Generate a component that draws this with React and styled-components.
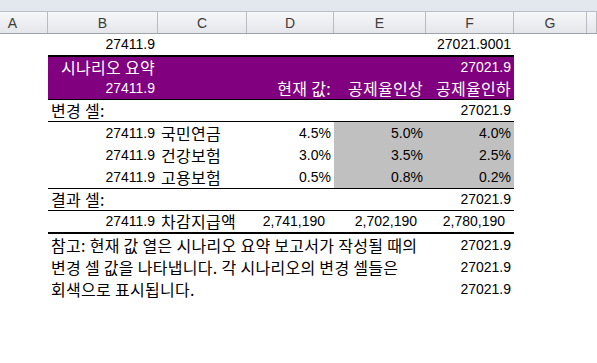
import React from 'react';
import styled, { createGlobalStyle } from 'styled-components';

const GlobalStyle = createGlobalStyle`
  html, body, #root {
    margin: 0;
    padding: 0;
    background: #fff;
  }
  body {
    font-family: "Liberation Sans", "Noto Sans CJK KR", sans-serif;
    font-size: 14px;
    color: #000;
  }
`;

const COLS = '48px 110px 89px 87px 92px 88px 73px 1fr';

// --- Sheet chrome ---

const Sheet = styled.div`
  width: 597px;
  height: 363px;
  overflow: hidden;
  background: #fff;
`;

const TopStrip = styled.div`
  height: 11px;
  background: #e3e8ef;
  border-bottom: 1px solid #b9c0c9;
`;

const HeaderRow = styled.div`
  display: grid;
  grid-template-columns: ${COLS};
  height: 22px;
  box-sizing: border-box;
  background: linear-gradient(#f6f7f9, #e4e6ea);
  border-bottom: 1px solid #9ea3aa;
`;

const ColHead = styled.div`
  display: flex;
  align-items: center;
  justify-content: center;
  padding-right: ${p => p.$shift || 0}px;
  border-right: 1px solid #b8bcc2;
  color: #3c3c3c;
  font-size: 14px;
`;

// --- Table rows ---

const Row = styled.div`
  display: grid;
  grid-template-columns: ${COLS};
  height: ${p => p.$h || 22}px;
  box-sizing: border-box;
`;

const Cell = styled.div`
  grid-column: ${p => p.$span || 'auto'};
  display: flex;
  align-items: flex-end;
  justify-content: ${p => (p.$left ? 'flex-start' : 'flex-end')};
  padding: 0 ${p => p.$pr ?? 3}px 3px 3px;
  box-sizing: border-box;
  white-space: nowrap;
  overflow: visible;
  background: ${p => (p.$purple ? '#800080' : p.$gray ? '#c0c0c0' : 'transparent')};
  color: ${p => (p.$purple ? '#fff' : '#000')};
  border-bottom: ${p => (p.$line ? `${p.$line}px solid #000` : 'none')};
  line-height: 16px;
  font-family: ${p => (p.$ko ? '"Noto Sans CJK KR", sans-serif' : 'inherit')};
  font-size: ${p => (p.$ko ? 16 : 14)}px;
  letter-spacing: ${p => (p.$ko ? '0.3px' : 'normal')};
`;

const Blank = styled.div``;

const Table = styled.div`
  display: flex;
  flex-direction: column;
`;

const letters = [
  ['A', 22],
  ['B'],
  ['C'],
  ['D'],
  ['E'],
  ['F'],
  ['G'],
  [''],
];

const changing = [
  ['국민연금', '4.5%', '5.0%', '4.0%'],
  ['건강보험', '3.0%', '3.5%', '2.5%'],
  ['고용보험', '0.5%', '0.8%', '0.2%'],
];

const notes = [
  '참고: 현재 값 열은 시나리오 요약 보고서가 작성될 때의',
  '변경 셀 값을 나타냅니다. 각 시나리오의 변경 셀들은',
  '회색으로 표시됩니다.',
];

export default function App() {
  return (
    <>
      <GlobalStyle />
      <Sheet>
        <TopStrip />
        <HeaderRow>
          {letters.map(([l, s], i) => (
            <ColHead key={i} $shift={s}>{l}</ColHead>
          ))}
        </HeaderRow>
        <Table>
          <Row $h={23}>
            <Blank />
            <Cell $line={2}>27411.9</Cell>
            <Cell $line={2} />
            <Cell $line={2} />
            <Cell $line={2} />
            <Cell $line={2}>27021.9001</Cell>
          </Row>
          <Row $h={21}>
            <Blank />
            <Cell $purple $ko>시나리오 요약</Cell>
            <Cell $purple />
            <Cell $purple />
            <Cell $purple />
            <Cell $purple>27021.9</Cell>
          </Row>
          <Row>
            <Blank />
            <Cell $purple $line={1}>27411.9</Cell>
            <Cell $purple $line={1} />
            <Cell $purple $ko $line={1}>현재 값:</Cell>
            <Cell $purple $ko $line={1}>공제율인상</Cell>
            <Cell $purple $ko $line={1}>공제율인하</Cell>
          </Row>
          <Row>
            <Blank />
            <Cell $left $ko $line={1}>변경 셀:</Cell>
            <Cell $line={1} />
            <Cell $line={1} />
            <Cell $line={1} />
            <Cell $line={1}>27021.9</Cell>
          </Row>
          {changing.map(([name, cur, up, down], i) => {
            const last = i === changing.length - 1;
            const line = last ? 1 : 0;
            return (
              <Row key={name} $h={last ? 23 : 22}>
                <Blank />
                <Cell $line={line}>27411.9</Cell>
                <Cell $left $ko $line={line}>{name}</Cell>
                <Cell $line={line}>{cur}</Cell>
                <Cell $gray $line={line}>{up}</Cell>
                <Cell $gray $line={line}>{down}</Cell>
              </Row>
            );
          })}
          <Row>
            <Blank />
            <Cell $left $ko $line={1}>결과 셀:</Cell>
            <Cell $line={1} />
            <Cell $line={1} />
            <Cell $line={1} />
            <Cell $line={1}>27021.9</Cell>
          </Row>
          <Row $h={23}>
            <Blank />
            <Cell $line={2}>27411.9</Cell>
            <Cell $left $ko $line={2}>차감지급액</Cell>
            <Cell $line={2} $pr={9}>2,741,190</Cell>
            <Cell $line={2} $pr={9}>2,702,190</Cell>
            <Cell $line={2} $pr={9}>2,780,190</Cell>
          </Row>
          {notes.map(text => (
            <Row key={text}>
              <Blank />
              <Cell $left $ko $span="2 / 6">{text}</Cell>
              <Cell>27021.9</Cell>
            </Row>
          ))}
        </Table>
      </Sheet>
    </>
  );
}
